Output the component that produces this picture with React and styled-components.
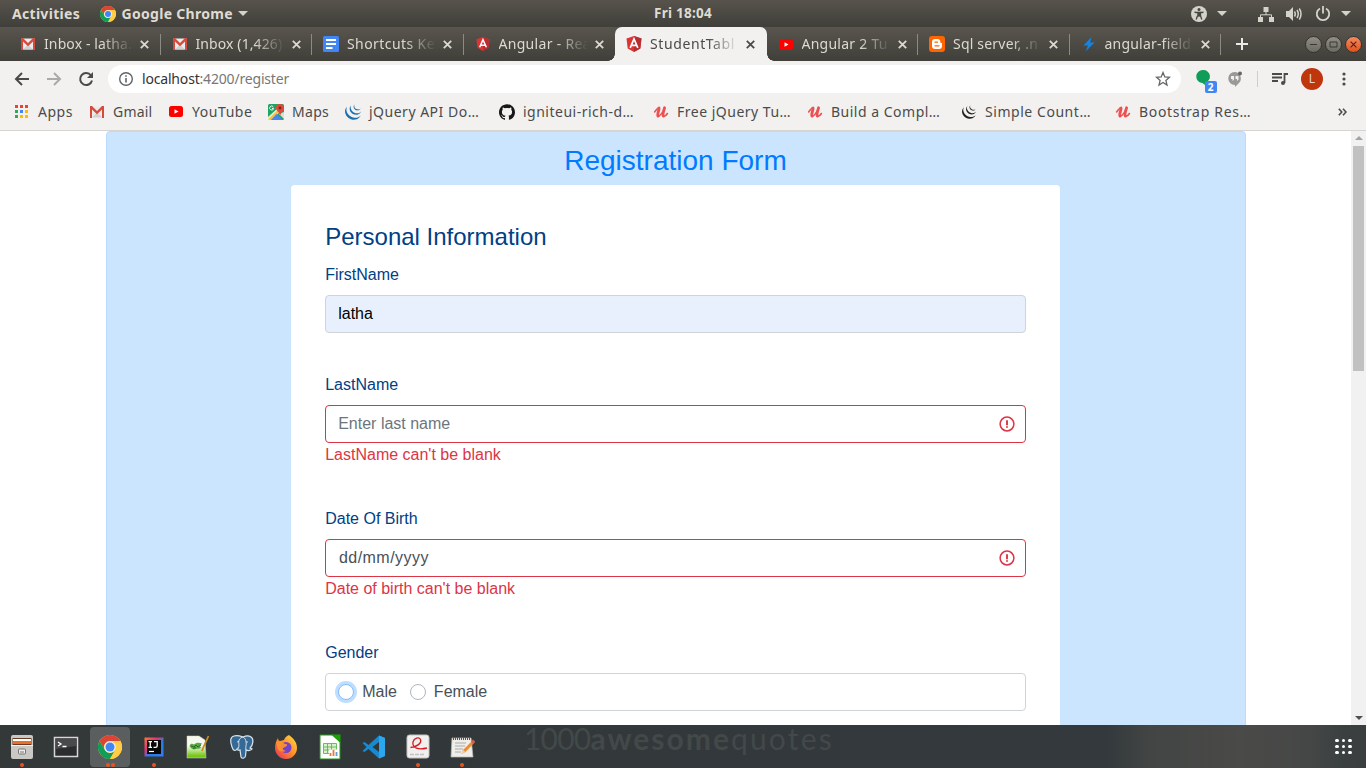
import React from 'react';
import styled, { createGlobalStyle, css } from 'styled-components';
import { SiGithub, SiJquery } from 'react-icons/si';

const Global = createGlobalStyle`
  * { box-sizing: border-box; }
  html, body { margin: 0; padding: 0; overflow: hidden; }
  body { font-family: "Liberation Sans", Arial, sans-serif; }
  svg { display: block; flex: none; }
`;

const ui = css`font-family: "Noto Sans", "Open Sans", sans-serif;`;

const Screen = styled.div`
  width: 1366px; height: 768px; overflow: hidden;
  display: flex; flex-direction: column; background: #fff;
`;
const Text = styled.span`
  white-space: nowrap;
  letter-spacing: ${p => p.$track || 0}px;
`;

/* ---------- system bar ---------- */
const SystemBar = styled.header`
  ${ui}
  height: 27px; flex: none;
  display: grid; grid-template-columns: 1fr auto 1fr; align-items: center;
  background: linear-gradient(#57534c, #403f3a);
  color: #dfdbd2; font-size: 14px; font-weight: 700;
`;
const SystemLeft = styled.div`display: flex; align-items: center; padding-left: 12px;`;
const AppMenu = styled.div`display: flex; align-items: center; gap: 5.5px; margin-left: 20px;`;
const SystemRight = styled.div`display: flex; align-items: center; justify-content: flex-end; padding-right: 15px;`;
const Clock = styled.div`font-size: 13.5px; line-height: 27px; letter-spacing: 0.25px;`;
const Caret = styled.i`
  border: 5px solid transparent; border-top-color: #d5d2ca; border-bottom: 0;
  margin-left: ${p => p.$gap || 0}px;
`;
const Slot = styled.span`display: flex; margin-left: ${p => p.$gap || 0}px;`;

/* ---------- tab strip ---------- */
const TabStrip = styled.nav`
  ${ui}
  height: 34px; flex: none; display: flex; padding-left: 9px;
  background: linear-gradient(#59554e, #403f3a);
`;
const Tab = styled.div`
  position: relative; width: 151.5px; height: 34px; flex: none;
  display: flex; align-items: center; padding-left: 10px;
  color: ${p => (p.$active ? '#4a4a4a' : '#dcd9d2')};
  background: ${p => (p.$active ? '#f2f1f0' : 'transparent')};
  border-radius: 7px 7px 0 0;
  font-size: 14px;
  ${p => p.$line && css`
    &::after { content: ''; position: absolute; right: 0; top: 7px; width: 1px; height: 21px; background: #8d8a83; }
  `}
  ${p => p.$active && css`
    &::before, &::after {
      content: ''; position: absolute; bottom: 0; width: 7px; height: 7px;
    }
    &::before { left: -7px; background: radial-gradient(circle at 0 0, transparent 6.5px, #f2f1f0 7px); }
    &::after { right: -7px; background: radial-gradient(circle at 100% 0, transparent 6.5px, #f2f1f0 7px); }
  `}
`;
const Favicon = styled.span`width: 18px; display: flex; justify-content: center;`;
const TabTitle = styled.span`
  width: 89px; margin-left: 7px; white-space: nowrap;
  letter-spacing: ${p => p.$track || 0}px; line-height: 22px;
  mask-image: linear-gradient(90deg, #000 58px, transparent 89px);
`;
const TabClose = styled.span`margin-left: 7px; display: flex;`;
const NewTab = styled.span`display: flex; align-items: center; margin-left: 15px;`;
const WindowButtons = styled.div`margin-left: auto; margin-right: 4.5px; display: flex; align-items: center; gap: 3px;`;
const WindowButton = styled.span`
  width: 17px; height: 17px; border-radius: 50%; border: 1px solid #35332f;
  background: ${p => (p.$close ? 'linear-gradient(#f58b60, #e2501c)' : 'linear-gradient(#918e86, #6c6a63)')};
  display: flex; align-items: center; justify-content: center;
`;

/* ---------- toolbar ---------- */
const Toolbar = styled.div`
  ${ui}
  height: 36px; flex: none; display: flex; align-items: center;
  padding: 0 15px 0 14px; background: #f2f1f0;
`;
const NavIcons = styled.div`display: flex; gap: 16px; width: 94px;`;
const Omnibox = styled.div`
  width: 1073px; height: 28px; border-radius: 14px; background: #fff;
  display: flex; align-items: center; padding: 0 10px 0 10px;
  font-size: 14px; color: #777; letter-spacing: -0.18px;
`;
const Url = styled.span`margin-left: 8px; flex: 1; position: relative; top: -1px; b { color: #333; font-weight: 400; }`;
const Extensions = styled.div`display: flex; align-items: center; flex: 1; padding-left: 15px;`;
const Hangouts = styled.span`position: relative; width: 22px; height: 24px;`;
const Badge = styled.span`
  position: absolute; left: 8.5px; top: 14px; width: 12px; height: 12px; border-radius: 2px;
  background: #4285f4; color: #fff; font: 700 10px/12px "Noto Sans", sans-serif; text-align: center;
`;
const Divider = styled.i`width: 1px; height: 16px; background: #cfcecc; margin-left: 14px;`;
const Avatar = styled.span`
  width: 22px; height: 22px; border-radius: 50%; background: #bf360c; color: #e9d3cc;
  font-size: 12px; line-height: 22px; text-align: center; margin-left: 13px;
`;

/* ---------- bookmarks ---------- */
const Bookmarks = styled.div`
  ${ui}
  height: 34px; flex: none; display: flex; align-items: center; padding: 0 0 4px 12px;
  background: #f2f1f0; border-bottom: 1px solid #d6d5d4; color: #4b4b4b; font-size: 14px;
`;
const Bookmark = styled.div`
  width: ${p => p.$w}px; display: flex; align-items: center; gap: ${p => p.$gap || 7}px;
`;

/* ---------- page ---------- */
const Page = styled.main`flex: 1; min-height: 0; display: flex; overflow: hidden;`;
const PageBody = styled.div`width: 1351px; display: flex; justify-content: center; overflow: hidden; height: 594px;`;
const Panel = styled.section`
  width: 1140px; height: 900px; flex: none; background: #cce5ff; border: 1px solid #b8daff; border-radius: 4px;
  display: flex; flex-direction: column; align-items: center; padding-top: 12px;
`;
const Title = styled.h3`margin: 0 0 7px; font-size: 28px; line-height: 34px; font-weight: 400; color: #007bff;`;
const Card = styled.div`width: 769px; flex: 1; background: #fff; border-radius: 4px; padding: 37px 34px; color: #004085;`;
const Section = styled.h4`margin: 0 0 12px; padding-left: 0.2px; font-size: 24px; line-height: 29px; font-weight: 400;`;
const Group = styled.div`height: ${p => p.$h}px; font-size: 16px; line-height: 24px;`;
const Label = styled.div`margin-bottom: 8px; padding-left: 0.2px;`;
const Control = styled.div`
  height: 38px; border: 1px solid ${p => (p.$invalid ? '#dc3545' : '#ced4da')}; border-radius: 4px;
  background: ${p => (p.$filled ? '#e8f0fe' : '#fff')}; color: ${p => p.$color || '#495057'};
  display: flex; align-items: center; justify-content: space-between; padding: 0 10px 0 ${p => p.$pad || 12.2}px;
`;
const ErrorText = styled.div`color: #dc3545; padding-left: 0.2px;`;
const Radios = styled(Control)`justify-content: flex-start; padding: 0 12px;`;
const Radio = styled.i`
  width: 16px; height: 16px; border-radius: 50%; background: #fff;
  border: 1px solid ${p => (p.$focus ? '#80bdff' : '#adb5bd')};
  box-shadow: ${p => (p.$focus ? '0 0 0 3px #bfdeff' : 'none')};
`;
const RadioLabel = styled.span`margin: 0 12.8px 0 8.2px;`;
const Scrollbar = styled.div`
  width: 15px; background: #f1f1f1; display: flex; flex-direction: column; align-items: center; padding: 5px 0;
  justify-content: space-between; height: 594px;
`;
const Thumb = styled.i`width: 11px; height: 225px; background: #c1c1c1; margin: 6px 0 auto;`;
const Arrow = styled.i`
  border: 4px solid transparent; height: 0; border-top-width: 0; border-bottom: 4px solid #a3a3a3;
  ${p => p.$down && css`border-bottom-width: 0; border-top: 4px solid #505050;`}
`;

/* ---------- dock ---------- */
const Dock = styled.footer`
  height: 43px; flex: none; display: flex; align-items: center;
  background: linear-gradient(90deg, #343839 0, #32383a 380px, #33393c 1105px, #424544 1150px, #4a4a48 1240px, #454746 1310px, #3a3f40 1345px, #3a3e3f 1366px);
`;
const DockItem = styled.div`
  position: relative; width: 44px; height: 43px; display: flex; align-items: center; justify-content: center;
  &::before {
    content: ''; position: absolute; inset: 2px 2px 1px; border-radius: 4px;
    background: ${p => (p.$active ? '#5b5e5f' : 'transparent')};
  }
  svg { position: relative; }
`;
const Dots = styled.span`
  position: absolute; bottom: 1px; left: 0; width: 44px; display: flex; gap: 1px; justify-content: center;
  i { width: 4px; height: 4px; border-radius: 50%; background: #e95420; }
`;
const Wallpaper = styled.span`
  margin-left: 40px; align-self: flex-start; color: #434849;
  font: 400 30px/26px Lato, sans-serif; letter-spacing: -0.8px; white-space: nowrap;
  b { font-weight: 700; letter-spacing: 2px; }
  span { letter-spacing: 2.2px; }
`;
const Launcher = styled.span`
  margin: 0 14px 0 auto; display: grid; grid-template-columns: repeat(3, 4px); gap: 2.5px;
  i { width: 3.6px; height: 3.6px; border-radius: 50%; background: #fff; }
`;

/* ---------- icons ---------- */
const Svg = ({ s = 16, h, v = '0 0 16 16', children, ...r }) => (
  <svg width={s} height={h || s} viewBox={v} fill="none" {...r}>{children}</svg>
);
const Chrome = ({ s }) => (
  <Svg s={s} v="0 0 24 24">
    <circle cx="12" cy="12" r="12" fill="#ffce44" />
    <path d="M1.6 6A12 12 0 0 1 22.4 6H12a6 6 0 0 0-5.2 9z" fill="#db4437" />
    <path d="M1.6 6A12 12 0 0 0 12 24l5.2-9A6 6 0 0 1 6.8 15z" fill="#0f9d58" />
    <path d="M22.4 6H12a6 6 0 0 1 5.2 9L12 24A12 12 0 0 0 22.4 6z" fill="#ffce44" />
    <circle cx="12" cy="12" r="5.8" fill="#f1f1f1" />
    <circle cx="12" cy="12" r="4.5" fill="#4285f4" />
  </Svg>
);
const GmailIcon = () => (
  <Svg s={14} h={12} v="0 0 14 12">
    <rect x="0.5" y="0.5" width="13" height="11" fill="#eceaea" />
    <path d="M2 11.5 7 6.5l5 5z" fill="#d2d0d0" />
    <path d="M0 0h2l5 5 5-5h2v12h-2V3.6L7 8.3 2 3.6V12H0z" fill="#d54b3d" />
  </Svg>
);
const DocsIcon = () => (
  <Svg><rect width="16" height="16" rx="1.5" fill="#4285f4" /><path d="M3 4h10M3 8h10M3 12h6.500" stroke="#fff" strokeWidth="2" /></Svg>
);
const AngularIcon = ({ s = 16 }) => (
  <Svg s={s}>
    <path d="M8 0 15.500 2.600 14.300 12.400 8 16 1.700 12.400.5 2.600z" fill="#dd3333" />
    <path d="M8 0 15.500 2.600 14.300 12.400 8 16z" fill="#b52e31" />
    <path d="M4.200 11.800 8 3l3.800 8.800M5.700 9.300h4.600" stroke="#fff" strokeWidth="1.700" />
  </Svg>
);
const YoutubeIcon = () => (
  <Svg s={14} h={11} v="0 0 14 11"><rect width="14" height="11" rx="2.500" fill="#f00" /><path d="M5.500 3.200v4.600l4-2.300z" fill="#fff" /></Svg>
);
const BloggerIcon = () => (
  <Svg><rect width="16" height="16" rx="3" fill="#ff6600" />
    <path d="M6 3h2.600A2.700 2.700 0 0 1 11.300 5.700c0 1 .3 1.300 1.700 1.300v3a3 3 0 0 1-3 3H6a3 3 0 0 1-3-3V6a3 3 0 0 1 3-3z" fill="#fff" />
    <path d="M6 6.200h2.500M6 9.800h4" stroke="#ff6600" strokeWidth="1.300" strokeLinecap="round" />
  </Svg>
);
const BoltIcon = () => <Svg s={14} h={16} v="0 0 14 16"><path d="M9.500 1 1.500 9.500H6L3.500 15.500 12.500 6.500H8.200z" fill="#1583e0" /></Svg>;
const Cross = ({ c = '#dcd9d2', s = 9, w = 1.8 }) => <Svg s={s} v="0 0 9 9"><path d="M.8.8l7.400 7.400M8.200.8.8 8.200" stroke={c} strokeWidth={w} /></Svg>;
const AppsIcon = () => (
  <Svg s={18} v="-2 -1 18 18">
    {['#ea4335', '#ea4335', '#ea4335', '#34a853', '#4285f4', '#fbbc05', '#34a853', '#fbbc05', '#fbbc05'].map((c, i) => (
      <rect key={i} x={1 + (i % 3) * 5} y={1 + Math.floor(i / 3) * 5} width="3" height="3" fill={c} />
    ))}
  </Svg>
);
const MapsIcon = () => (
  <Svg>
    <rect width="16" height="16" rx="1.500" fill="#1fa463" />
    <path d="M0 13 11 3l3 3L3 16H0z" fill="#f4e9c5" /><path d="M0 15.500 11 5l1.500 1.500L3 16z" fill="#fbc02d" />
    <path d="M16 8v7l-5-5z" fill="#ddd" />
    <path d="M3 16 8.500 10 14.500 16z" fill="#4a86ee" />
    <path d="M12 0a4 4 0 0 1 4 4c0 3-3 4-3.600 7.500C11.500 8 8 7 8 4a4 4 0 0 1 4-4z" fill="#e04a3a" />
    <circle cx="12" cy="4" r="1.400" fill="#7d231c" />
    <path d="M5.300 2.900a2 2 0 1 0 .3 1.600H4" stroke="#fff" strokeWidth=".9" />
  </Svg>
);
const UdemyIcon = () => (
  <Svg stroke="#ec5252" strokeLinecap="round" strokeLinejoin="round">
    <path d="M1.600 8C3 6 4.500 4.200 5.800 3.800" strokeWidth="1.500" />
    <path d="M6 4C6.600 5.500 3.800 10.500 5 12M11.600 3.800C10.600 7 9.400 10.800 10.300 12" strokeWidth="2.900" />
    <path d="M5 12.300C7 12.600 9 9 10.800 6M10.500 12.300c1.500.2 3-1.200 3.900-2.800" strokeWidth="1.600" />
  </Svg>
);
const Alert = () => (
  <Svg s={16} stroke="#dc3545"><circle cx="8" cy="8" r="6.900" strokeWidth="1.500" /><path d="M8 4.300v4.900M8 10.300v1.500" strokeWidth="1.900" /></Svg>
);

const TABS = [
  ['Inbox - latha.', <GmailIcon />, 0.12, true],
  ['Inbox (1,426)', <GmailIcon />, 0.1, true],
  ['Shortcuts Ke', <DocsIcon />, 0.42, true],
  ['Angular - Rea', <AngularIcon s={14} />, 0.3],
  ['StudentTabl', <AngularIcon />, 0.6, false, true],
  ['Angular 2 Tu', <YoutubeIcon />, 0.25, true],
  ['Sql server, .n', <BloggerIcon />, 0.2, true],
  ['angular-field', <BoltIcon />, 0.2, true],
];
const BOOKMARKS = [
  ['Apps', <AppsIcon />, 76, 0.5, 8],
  ['Gmail', <GmailIcon />, 79, 0.2],
  ['YouTube', <YoutubeIcon />, 100, 0.55],
  ['Maps', <MapsIcon />, 77, 0.3],
  ['jQuery API Do…', <SiJquery size={16} color="#1b6fad" />, 154, 0.5],
  ['igniteui-rich-d…', <SiGithub size={16} color="#191717" />, 154, 0.5],
  ['Free jQuery Tu…', <UdemyIcon />, 154, 0.5],
  ['Build a Compl…', <UdemyIcon />, 154, 0.5],
  ['Simple Count…', <SiJquery size={14} color="#222" />, 154, 0.55],
  ['Bootstrap Res…', <UdemyIcon />, 154, 0.68],
];

const D = ({ children }) => <Svg s={26} v="0 0 26 26">{children}</Svg>;
const DOCK = [
  [<D><rect x="2" y="1" width="22" height="24" rx="2" fill="#c9c8c4" /><rect x="3.500" y="4" width="19" height="7" fill="#6b3a20" /><path d="M4 5h18v2H4z" fill="#fff" /><path d="M4 7h18v3H4z" fill="#e8702a" /><path d="M2 11.500h22" stroke="#f3f3f1" /><rect x="9.500" y="15" width="7" height="5" rx="1" fill="#eee" stroke="#77756f" /><path d="M11 18h4" stroke="#77756f" /></D>, 1],
  [<D><rect x="1.500" y="3.500" width="23" height="19" fill="#2c2d2e" stroke="#d7d7d5" strokeWidth="1.500" /><path d="M3 5h20v7L3 15z" fill="#484a4b" /><path d="m5 8 3 2-3 2M9.500 12.500h4" stroke="#fff" strokeWidth="1.300" /></D>, 0],
  [<Chrome s={24} />, 2, true],
  [<D><defs><linearGradient id="ij" x1="0" y1="0" x2="1" y2="1"><stop stopColor="#f97a3d" /><stop offset=".35" stopColor="#e6317a" /><stop offset=".6" stopColor="#1f7fe8" /><stop offset="1" stopColor="#3c78f0" /></linearGradient></defs><rect x="3.500" y="3.500" width="19" height="19" fill="url(#ij)" /><rect x="6" y="6" width="14" height="14" fill="#080808" /><path d="M7.500 7.700h3.500M9.250 8v5M7.500 13.300h3.500M13 7.700h3.200v4q0 1.700-1.700 1.700H12.500" stroke="#fff" strokeWidth="1.300" /><path d="M8 17.500h5" stroke="#fff" strokeWidth="1.200" /></D>, 1],
  [<D><defs><linearGradient id="np" x2="0" y2="1"><stop offset=".45" stopColor="#f5f8ee" /><stop offset=".9" stopColor="#75c814" /></linearGradient></defs><path d="M2 2h12l6 4 1 18H2z" fill="url(#np)" stroke="#d0d7bd" strokeWidth=".5" /><path d="M5 11c1-2 3-1 4-.5 2-2 5-2 8-1l-2 2.500 1 2c-2 1-3 .5-5 1-2 1-4 0-5-1-1-1-2-2-1-3z" fill="#5aa845" /><path d="m6 12 3 1 2-2 2 2 3-2M8 14.500l3-1" stroke="#1d5a20" strokeWidth=".8" /><path d="m23.500 2-5 11-1.500 4" stroke="#c88a23" strokeWidth="1.800" /></D>, 0],
  [<D><path d="M5 2C1 3 1 7 3 13c1 3 3 5 5 2 0 1 2 1.500 3 1l1 7c1 2 4 1.500 4.500-1l.6-6c2 1 5 .5 6-1l-2-1c3-3 4-9 1-11-3-2-6-1-8 0-3-1-6-2-9-1z" fill="#366a96" stroke="#d9e4ed" strokeWidth="1.200" /><path d="M9 15c2-3 0-6 1-9 1-2 3-3 4-3M17 16c-1-3 1-5 0-8 0-2-1-4-3-5M8 8l2-.5M17 8h2" stroke="#d9e4ed" strokeWidth=".9" /></D>, 0],
  [<D><defs><linearGradient id="ff" x1="1" y1="0" x2="0" y2="1"><stop stopColor="#ffe34b" /><stop offset=".45" stopColor="#ff9427" /><stop offset="1" stopColor="#e42b61" /></linearGradient></defs><path d="M16 1c4 3 8 7 8 13a11 11 0 0 1-22 0c0-4 1-7 3-10 0 2 1 3 2 3l4-1c1-3 3-4 5-5z" fill="url(#ff)" /><circle cx="13" cy="13.500" r="5.500" fill="#7542c9" /><path d="M3 8c4-2 6 0 9 2 3 0 3 2 0 3s-3 3 1 4c-5 2-9-1-9-5z" fill="#ff932e" opacity=".9" /></D>, 0],
  [<D><path d="M3 1h13l7 7v17H3z" fill="#fff" stroke="#27921f" /><path d="M14 .5h9.500V9z" fill="#18a303" /><path d="M6.500 9.500h13v10h-13zM6.500 13h13M6.500 16h13M10.500 9.500v10M14.500 9.500v10" stroke="#5fb455" strokeWidth=".9" fill="#d9f0cf" /><path d="M12 15.500h9v7h-9z" fill="#fff" /><path d="M13.500 22v-3" stroke="#e5793b" strokeWidth="1.800" /><path d="M16.500 22v-6" stroke="#e5793b" strokeWidth="1.800" /><path d="M19.500 22v-4" stroke="#5a9fd0" strokeWidth="1.800" /></D>, 0],
  [<D><path d="m18 1.500 6 2.500v18l-6 2.500L7.500 15 3.500 18 1.500 17l4-4-4-4 2-1 4 3zM18 8l-6.500 5 6.500 5z" fill="#168bd2" fillRule="evenodd" /><path d="m18 1.500 6 2.500v18l-6 2.500z" fill="#2ca7ee" /></D>, 0],
  [<D><rect x="2" y="1" width="22" height="23" rx="2.500" fill="#f1f0ee" stroke="#c5c3bf" /><path d="M5.500 13.500C12 13 17 9 15.500 5.500 14 2.500 9 4 8 8c-1 5 4 8.500 14 6" stroke="#d71920" strokeWidth="1.300" /><path d="M5 20.500h15" stroke="#c4c2c0" strokeWidth="1.500" strokeDasharray="4 1" /></D>, 1],
  [<D><path d="M3 4h19l2 19H2z" fill="#eeede9" stroke="#bbb9b2" strokeWidth=".7" /><path d="M4 4.500h18" stroke="#555" strokeWidth="3" strokeDasharray="1 1" /><path d="M6 9h11M6 12h10M6 15h8M6 18h6" stroke="#aaa" /><path d="m24 6-10 10-1.500 4 4-2L26 8z" fill="#ec8d35" /><path d="m22 8 2-2.500 2 2L24 10z" fill="#d75757" /><path d="m14 16-1.500 4 4-2z" fill="#f3d5ad" /></D>, 1],
];

export default function App() {
  return (
    <Screen>
      <Global />
      <SystemBar>
        <SystemLeft>
          <Text $track={0.3}>Activities</Text>
          <AppMenu><Chrome s={16} /><Text $track={0.3}>Google Chrome</Text><Caret /></AppMenu>
        </SystemLeft>
        <Clock>Fri 18:04</Clock>
        <SystemRight>
          <Svg><circle cx="8" cy="8" r="8" fill="#d5d2ca" /><circle cx="8" cy="3.400" r="1.500" fill="#484640" /><path d="M3.500 6.200 8 6.800l4.500-.6" stroke="#484640" strokeWidth="1.500" /><path d="M6.600 6.500h2.800L9.600 10l1.200 3.500M9.400 9.500 8 9.800 6.600 9.500M6.400 10l-1.200 3.500" stroke="#484640" strokeWidth="1.300" /><path d="M6.300 6.500h3.400v3.800H6.300z" fill="#484640" /></Svg>
          <Caret $gap={10} />
          <Slot $gap={31}><Svg><path d="M5.500 1h5v5h-5zM0 11h5v5H0zM11 11h5v5h-5z" fill="#d5d2ca" /><path d="M8 6v3M2.500 11V8.800h11V11" stroke="#d5d2ca" /></Svg></Slot>
          <Slot $gap={12}><Svg stroke="#d5d2ca" strokeWidth="1.500"><path d="M0 5h3l4-4v14l-4-4H0z" fill="#d5d2ca" stroke="none" /><path d="M8.500 5.500q1.500 2.500 0 5M11 4q2.500 4 0 8M13.300 2.500q3.400 5.500 0 11" /></Svg></Slot>
          <Slot $gap={13}><Svg stroke="#d5d2ca" strokeWidth="1.800"><path d="M5 2.500a6.200 6.200 0 1 0 6 0M8 0v7.500" /></Svg></Slot>
          <Caret $gap={10} />
        </SystemRight>
      </SystemBar>

      <TabStrip>
        {TABS.map(([title, icon, track, line, active]) => (
          <Tab key={title} $line={line} $active={active}>
            <Favicon>{icon}</Favicon>
            <TabTitle $track={track}>{title}</TabTitle>
            <TabClose><Cross c={active ? '#4a4a4a' : undefined} /></TabClose>
          </Tab>
        ))}
        <NewTab><Svg s={12} v="0 0 12 12"><path d="M6 0v12M0 6h12" stroke="#eceae5" strokeWidth="2" /></Svg></NewTab>
        <WindowButtons>
          <WindowButton><Svg s={9} v="0 0 9 9"><path d="M1 4.500h7" stroke="#3b3935" /></Svg></WindowButton>
          <WindowButton><Svg s={9} v="0 0 9 9"><path d="M1 2h7v5H1z" stroke="#3b3935" /></Svg></WindowButton>
          <WindowButton $close><Cross s={7} w={1.4} c="#4b2317" /></WindowButton>
        </WindowButtons>
      </TabStrip>

      <Toolbar>
        <NavIcons>
          <Svg stroke="#4a4a4a" strokeWidth="2"><path d="M15 8H2.500M8 2 2 8l6 6" /></Svg>
          <Svg stroke="#aaa" strokeWidth="2"><path d="M1 8h12.500M8 2l6 6-6 6" /></Svg>
          <Svg stroke="#4a4a4a" strokeWidth="2"><path d="M13 4.500A6 6 0 1 0 14 9.500" /><path d="M15 1v6H9z" fill="#4a4a4a" stroke="none" /></Svg>
        </NavIcons>
        <Omnibox>
          <Svg stroke="#5f6368" strokeWidth="1.400"><circle cx="8" cy="8" r="6.300" /><path d="M8 7v4.500M8 4.300v1.500" strokeWidth="1.600" /></Svg>
          <Url><b>localhost</b>:4200/register</Url>
          <Svg stroke="#666" strokeWidth="1.300"><path d="m8 1.500 1.800 4.400 4.700.4-3.600 3.100 1.100 4.600-4-2.500L4 14l1.100-4.600-3.600-3.100 4.700-.4z" /></Svg>
        </Omnibox>
        <Extensions>
          <Hangouts>
            <Svg s={16} h={18} v="0 0 16 18"><path d="M7 3a6.500 6.500 0 0 1 2 12.800V18L6.500 16A6.500 6.500 0 0 1 7 3z" fill="#0f9d58" /></Svg>
            <Badge>2</Badge>
          </Hangouts>
          <Slot $gap={9}><Svg><path d="M7.500 1a6.500 6.500 0 0 1 4.500 11L8 16v-2A6.500 6.500 0 0 1 7.500 1z" fill="#999" /><path d="M4 5h3v3.500L5.500 10V8H4zM8.500 5h3v3.500L10 10V8H8.500z" fill="#f2f1f0" /><circle cx="13" cy="2.500" r="2" fill="#666" /></Svg></Slot>
          <Divider />
          <Slot $gap={14}><Svg stroke="#4a4a4a" strokeWidth="1.800"><path d="M0 3h10M0 6.500h10M0 10h6M12.500 12V3H16" /><circle cx="11" cy="12" r="2" fill="#4a4a4a" stroke="none" /></Svg></Slot>
          <Avatar>L</Avatar>
          <Slot $gap={19}><Svg s={4} h={14} v="0 0 4 14"><g fill="#4a4a4a"><circle cx="2" cy="2" r="1.600" /><circle cx="2" cy="7" r="1.600" /><circle cx="2" cy="12" r="1.600" /></g></Svg></Slot>
        </Extensions>
      </Toolbar>

      <Bookmarks>
        {BOOKMARKS.map(([name, icon, w, track, gap]) => (
          <Bookmark key={name} $w={w} $gap={gap}><Favicon>{icon}</Favicon><Text $track={track}>{name}</Text></Bookmark>
        ))}
        <Slot $gap={70}><Svg s={9} h={8} v="0 0 9 8" stroke="#4a4a4a" strokeWidth="1.600"><path d="m.8.800 3 3.200-3 3.200M5 .8 8 4 5 7.200" /></Svg></Slot>
      </Bookmarks>

      <Page>
        <PageBody>
          <Panel>
            <Title>Registration Form</Title>
            <Card>
              <Section>Personal Information</Section>
              <Group $h={110}><Label>FirstName</Label><Control $filled $color="#000">latha</Control></Group>
              <Group $h={134}>
                <Label>LastName</Label><Control $invalid $color="#6c757d">Enter last name<Alert /></Control>
                <ErrorText>LastName can't be blank</ErrorText>
              </Group>
              <Group $h={134}>
                <Label>Date Of Birth</Label><Control $invalid $pad={13}><Text $track={0.45}>dd/mm/yyyy</Text><Alert /></Control>
                <ErrorText>Date of birth can't be blank</ErrorText>
              </Group>
              <Group $h={110}>
                <Label>Gender</Label>
                <Radios><Radio $focus /><RadioLabel>Male</RadioLabel><Radio /><RadioLabel>Female</RadioLabel></Radios>
              </Group>
            </Card>
          </Panel>
        </PageBody>
        <Scrollbar><Arrow /><Thumb /><Arrow $down /></Scrollbar>
      </Page>

      <Dock>
        {DOCK.map(([icon, dots, active], i) => (
          <DockItem key={i} $active={active}>
            {icon}
            <Dots>{Array.from({ length: dots }, (_, k) => <i key={k} />)}</Dots>
          </DockItem>
        ))}
        <Wallpaper>1000<b>awesome</b><span>quotes</span></Wallpaper>
        <Launcher>{Array.from({ length: 9 }, (_, k) => <i key={k} />)}</Launcher>
      </Dock>
    </Screen>
  );
}
